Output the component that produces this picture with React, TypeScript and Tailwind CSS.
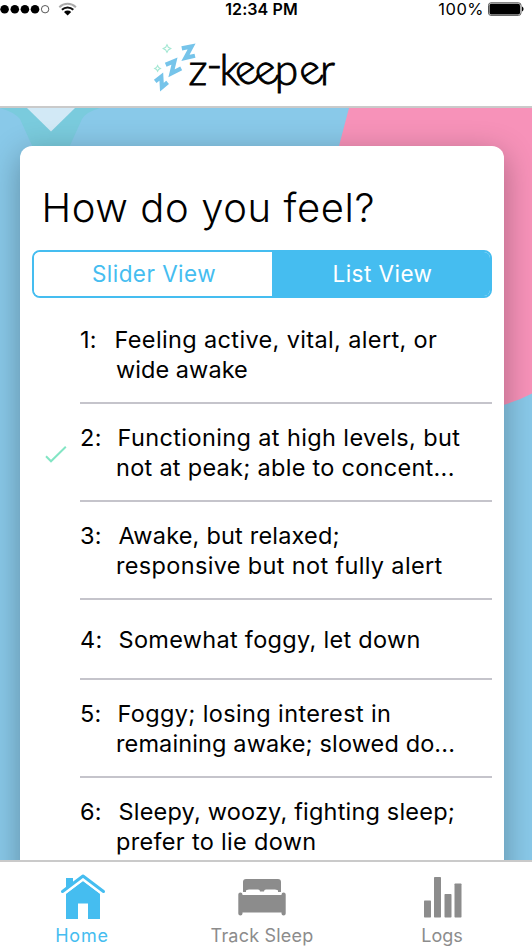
import React from "react";

type Feeling = {
  id: number;
  indent: string;
  lines: { text: string; spacing: string }[];
  selected?: boolean;
};

const feelings: Feeling[] = [
  {
    id: 1,
    indent: "w-[34.5px]",
    lines: [
      { text: "Feeling active, vital, alert, or", spacing: "tracking-[0.36px]" },
      { text: "wide awake", spacing: "tracking-[0.05px]" },
    ],
  },
  {
    id: 2,
    indent: "w-[37.5px]",
    selected: true,
    lines: [
      { text: "Functioning at high levels, but", spacing: "tracking-[0.38px]" },
      { text: "not at peak; able to concent...", spacing: "tracking-[0.28px]" },
    ],
  },
  {
    id: 3,
    indent: "w-[38.5px]",
    lines: [
      { text: "Awake, but relaxed;", spacing: "tracking-[0.2px]" },
      { text: "responsive but not fully alert", spacing: "tracking-[0.34px]" },
    ],
  },
  {
    id: 4,
    indent: "w-[38.5px]",
    lines: [{ text: "Somewhat foggy, let down", spacing: "tracking-[0.3px]" }],
  },
  {
    id: 5,
    indent: "w-[37.5px]",
    lines: [
      { text: "Foggy; losing interest in", spacing: "tracking-[0.36px]" },
      { text: "remaining awake; slowed do...", spacing: "tracking-[0.12px]" },
    ],
  },
  {
    id: 6,
    indent: "w-[38.5px]",
    lines: [
      { text: "Sleepy, woozy, fighting sleep;", spacing: "tracking-[0.19px]" },
      { text: "prefer to lie down", spacing: "tracking-[0.32px]" },
    ],
  },
];

function StatusBar() {
  return (
    <div className="flex h-5 items-center justify-between text-black">
      <div className="flex w-[175px] items-center">
        <svg width="80" height="20" viewBox="0 0 80 20">
          <circle cx="4.6" cy="9.2" r="4.3" />
          <circle cx="14.8" cy="9.2" r="4.3" />
          <circle cx="24.9" cy="9.2" r="4.3" />
          <circle cx="35" cy="9.2" r="4.3" />
          <circle cx="45.1" cy="9.2" r="3.7" fill="none" stroke="#444" strokeWidth="0.9" />
          <g fill="none" strokeWidth="2">
            <path d="M59.3 7.2a12 12 0 0 1 16.6 0" stroke="#aaa" />
            <path d="M61.9 9.8a8.2 8.2 0 0 1 11.4 0" stroke="#111" />
          </g>
          <path d="M64 12a5.3 5.3 0 0 1 7.2 0l-3.6 3.6z" />
        </svg>
      </div>
      <div className="-mt-0.5 text-[16px] font-semibold tracking-[0.1px]">12:34 PM</div>
      <div className="flex w-[184px] items-center justify-end">
        <span className="-mt-0.5 mr-1 text-[16.5px] tracking-[0.5px]">100%</span>
        <svg width="44" height="20" viewBox="0 0 44 20">
          <rect x="0.5" y="2.8" width="32.5" height="12.6" rx="2.5" fill="#fff" stroke="#555" />
          <rect x="1.5" y="3.8" width="30.5" height="10.6" rx="1.6" />
          <path d="M34 6.6c2 .8 2 4.200 0 5z" />
        </svg>
      </div>
    </div>
  );
}

function Logo() {
  return (
    <svg width="200" height="60" viewBox="150 40 200 60" className="block overflow-visible">
      <g fill="none" stroke="#76c4ea" strokeWidth="4.2">
        <path d="M181.800 48.400L191.600 46.500L185.400 57.900L195 55.800" />
        <path d="M165.700 64.800L174.500 61L171.500 73.400L181.200 68.400" />
        <path d="M155.200 81.300L161.300 76.600L161.900 87.200L167.600 82.300" />
      </g>
      <g fill="none" stroke="#a5e8d4" strokeWidth="1.1">
        <path d="M167 44.800l1.300 2.500 2.500 1.300-2.500 1.300-1.300 2.500-1.300-2.500-2.500-1.300 2.500-1.300z" />
        <path d="M157.600 65.500l1 1.900 1.900 1-1.900 1-1 1.900-1-1.900-1.900-1 1.900-1z" />
      </g>
      <text
        x="188.500 206.500 219.500 244 263.800 274.800 308.300 320"
        y="84.500 80 84.500 88.700 88.700 84.500 88.700 84.500"
        rotate="0 0 0 -35 -35 0 -35 0"
        className="font-['Lato',sans-serif] text-[42.5px] font-light"
        stroke="#000"
        strokeWidth="0.9"
      >
        z-keeper
      </text>
    </svg>
  );
}

function Backdrop() {
  return (
    <svg className="absolute inset-0 h-full w-full" viewBox="0 108 532 752" preserveAspectRatio="none">
      <rect y="108" width="532" height="752" fill="#89c9e9" />
      <path d="M0 108H100Q86 112 82 119L68 150H34L20 119Q14 112 0 108Z" fill="#7acbdd" />
      <path d="M27 108H75L51 131.500Z" fill="#d2e9f6" />
      <path d="M349 108H532V393.500Q518 401 500 406H330V180Z" fill="#f792b9" />
    </svg>
  );
}

function FeelingRow({ feeling }: { feeling: Feeling }) {
  return (
    <li className="flex pl-6">
      <div className="flex w-9 shrink-0 items-center">
        {feeling.selected && (
          <svg width="24" height="22" viewBox="0 0 24 22" className="mt-1.5">
            <path d="M2 11.300L7 16.300L21.800 1.800" fill="none" stroke="#83e5c4" strokeWidth="2" />
          </svg>
        )}
      </div>
      <div
        className={
          feeling.lines.length === 1
            ? "flex h-20 flex-1 flex-col justify-center border-b-2 border-[#c5c4cb] pt-0.5"
            : "flex h-[98px] flex-1 flex-col justify-center border-b-2 border-[#c5c4cb] pt-0.5"
        }
      >
        {feeling.lines.map((line, i) => (
          <div key={line.text} className="flex h-[30px] items-center whitespace-nowrap text-[23.5px] leading-[30px]">
            <span className={i === 0 ? `${feeling.indent} shrink-0 tracking-[0.3px]` : "w-9 shrink-0"}>
              {i === 0 ? `${feeling.id}:` : ""}
            </span>
            <span className={line.spacing}>{line.text}</span>
          </div>
        ))}
      </div>
    </li>
  );
}

function HomeIcon() {
  return (
    <svg width="46" height="46" viewBox="0 0 46 46" fill="#45bdf0">
      <path d="M23 6.900L40 19.800V45H28V29.500H18V45H6V19.800z" />
      <path d="M2.500 18.600L23 3L43.500 18.600" fill="none" stroke="#fff" strokeWidth="6" />
      <path d="M6 4h7v6L6 15.500z" />
      <path d="M2.500 17.500L23 2L43.500 17.500" fill="none" stroke="#45bdf0" strokeWidth="3" strokeLinecap="round" strokeLinejoin="round" />
    </svg>
  );
}

function BedIcon() {
  return (
    <svg width="48" height="46" viewBox="0 0 48 46" fill="#8c8c8c">
      <path d="M5 18V8q0-3 3-3h32q3 0 3 3v10h-3v-1q0-1.500-3-1.500H28q-2 0-2 2h-4q0-2-2-2h-9q-3 0-3 1.500v1z" />
      <path d="M.3 20.500q0-2 2.100-2t2.100 2v.5h39v-.5q0-2 2.100-2t2.100 2v19q0 2-2.100 2t-2.100-2V38.500h-39v1q0 2-2.100 2t-2.100-2z" />
    </svg>
  );
}

function LogsIcon() {
  return (
    <svg width="40" height="46" viewBox="0 0 40 46" fill="#8c8c8c">
      <rect x="2" y="26.500" width="7" height="17" rx=".7" />
      <rect x="12" y="3" width="7" height="40.500" rx=".7" />
      <rect x="22.500" y="20" width="7" height="23.500" rx=".7" />
      <rect x="32.500" y="9.500" width="7" height="34" rx=".7" />
    </svg>
  );
}

export default function App() {
  return (
    <div className="flex h-[950px] w-[532px] flex-col overflow-hidden bg-white font-['Inter',sans-serif] text-black">
      <header className="h-[108px] shrink-0 border-b-2 border-[#cacaca]">
        <StatusBar />
        <div className="flex pl-[150px] pt-5">
          <Logo />
        </div>
      </header>

      <main className="relative h-[752px] shrink-0 overflow-hidden px-5 pt-[38px]">
        <Backdrop />
        <section className="relative h-[800px] w-[484px] rounded-xl bg-white shadow-[0_8px_32px_rgba(0,0,0,0.3)]">
          <h1 className="pl-[21.5px] pt-[37px] text-[40px] font-light leading-[50px] tracking-[0.6px]">
            <span className="whitespace-nowrap">How do you feel?</span>
          </h1>
          <div className="ml-3 mt-[17px] flex h-12 w-[460px] overflow-hidden rounded-lg border-2 border-[#45bdf0] text-[22.5px] tracking-[0.45px]">
            <button className="w-[238px] bg-white pl-0.5 text-[#45bdf0]">Slider View</button>
            <button className="flex-1 bg-[#45bdf0] pl-[3px] text-white">List View</button>
          </div>
          <ul className="mt-2 pr-3">
            {feelings.map((f) => (
              <FeelingRow key={f.id} feeling={f} />
            ))}
          </ul>
        </section>
      </main>

      <nav className="flex h-[90px] shrink-0 border-t-2 border-[#cacaca] bg-white text-[18px] text-[#8c8c8c]">
        <a className="flex w-[166px] flex-col items-center pt-3 text-[#45bdf0]">
          <HomeIcon />
          <span className="mr-0.5 mt-0.5 leading-7 tracking-[0.8px]">Home</span>
        </a>
        <a className="flex w-[192px] flex-col items-center pt-3">
          <BedIcon />
          <span className="mt-0.5 leading-7 tracking-[0.2px]">Track Sleep</span>
        </a>
        <a className="flex w-[168px] flex-col items-center pt-3">
          <LogsIcon />
          <span className="mt-0.5 leading-7">Logs</span>
        </a>
      </nav>
    </div>
  );
}
